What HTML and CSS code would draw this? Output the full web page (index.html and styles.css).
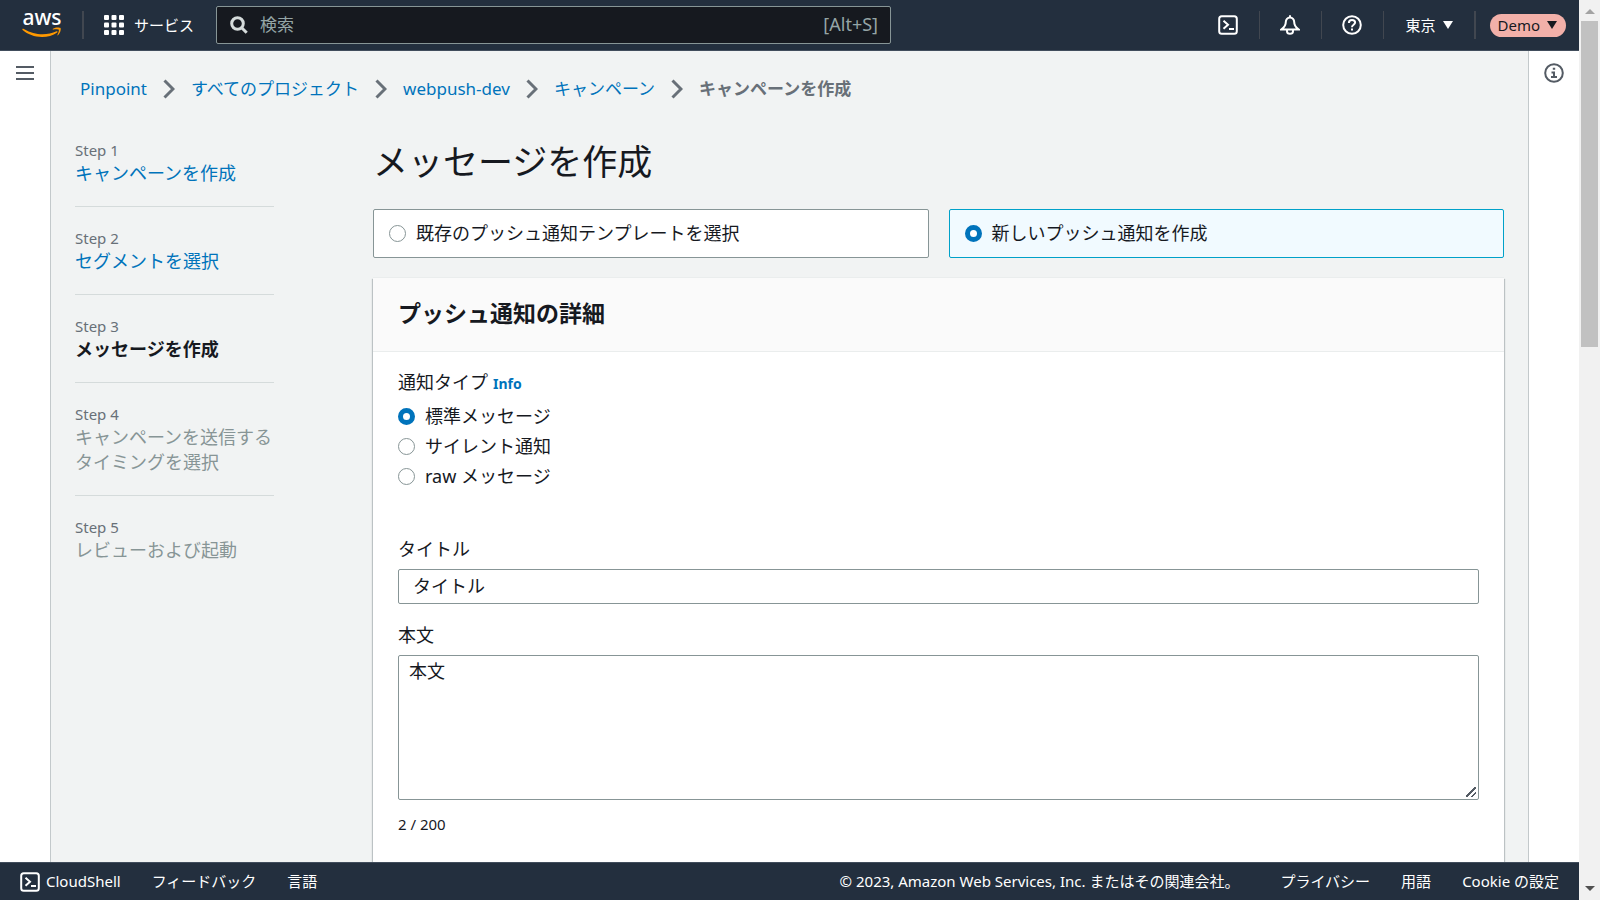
FILE: index.html
```html
<!DOCTYPE html>
<html lang="ja">
<head>
<meta charset="utf-8">
<title>キャンペーンを作成</title>
<link rel="stylesheet" href="styles.css">
</head>
<body>
<svg class="sprite" aria-hidden="true">
  <symbol id="shell" viewBox="0 0 20 20"><rect x="1.2" y="1.2" width="17.6" height="17.6" rx="2.5"/><path d="M5.5 5.8 10 9.8l-4.5 4M11 14h5"/></symbol>
  <symbol id="chevron" viewBox="0 0 12 20"><path d="M1.5 1.5 10 10l-8.500 8.500"/></symbol>
</svg>
<div class="window">
  <div class="page">
    <header class="topbar">
      <a class="logo" href="#" aria-label="AWS"><span class="logo-text">aws</span><svg class="smile" viewBox="0 0 40 11"><path d="M.3 2.300c.3-.6.9-.6 1.500-.2C8.500 6 14 7.300 20.500 7.300c5 0 10-1.200 14-3 .8-.3 1.500.5.7 1.100C31 8.600 25.500 10 20 10 12.500 10 5.500 7.500.6 3.100z"/><path d="M36.800 2.800c-.8-1-4.300-.5-5.700-.3-.5 0-.6-.4-.1-.7C33.500 0 37.800.4 38.500 1.100c.7.7-.1 5.300-2.500 7.200-.4.300-.8.100-.6-.3.500-1.300 2-4.300 1.400-5.200z"/></svg></a>
      <span class="rule"></span>
      <button class="services"><svg class="icon" viewBox="0 0 20 20"><g class="solid"><rect width="5" height="5" rx="1"/><rect x="7.500" width="5" height="5" rx="1"/><rect x="15" width="5" height="5" rx="1"/><rect y="7.500" width="5" height="5" rx="1"/><rect x="7.500" y="7.500" width="5" height="5" rx="1"/><rect x="15" y="7.500" width="5" height="5" rx="1"/><rect y="15" width="5" height="5" rx="1"/><rect x="7.500" y="15" width="5" height="5" rx="1"/><rect x="15" y="15" width="5" height="5" rx="1"/></g></svg>サービス</button>
      <label class="search"><svg class="search-icon" viewBox="0 0 18 18"><circle cx="7.500" cy="7.500" r="5.800"/><path d="m11.700 11.700 5 5"/></svg><input type="search" placeholder="検索" aria-label="検索"><span>[Alt+S]</span></label>
      <nav class="tools">
        <button aria-label="CloudShell"><svg class="icon"><use href="#shell"/></svg></button>
        <button aria-label="通知"><svg class="icon" viewBox="0 0 20 20"><path d="M10 .3v2.200M10 2.500c-2.600 0-4.200 2-4.200 4.600 0 4-1.800 5.600-4.300 7.300h17c-2.500-1.700-4.300-3.300-4.300-7.300 0-2.600-1.600-4.600-4.200-4.600zM7 15v1.200c0 1.500 1.300 2.600 3 2.600s3-1.100 3-2.600V15"/></svg></button>
        <button aria-label="ヘルプ"><svg class="icon" viewBox="0 0 20 20"><circle cx="10" cy="10" r="8.800"/><path d="M6.900 8c0-2 1.300-3.100 3.100-3.100s3.100 1.100 3.100 2.700c0 2.200-3.100 2.100-3.100 4.600M10 13.500v2"/></svg></button>
        <button class="region">東京<svg class="caret" viewBox="0 0 10 8"><path d="M0 0h10L5 8z"/></svg></button>
      </nav>
      <button class="account">Demo<svg class="caret" viewBox="0 0 10 8"><path d="M0 0h10L5 8z"/></svg></button>
    </header>

    <div class="workspace">
      <aside class="rail"><button aria-label="メニュー"><svg class="menu" viewBox="0 0 18 16"><path d="M0 2h18M0 8h18M0 14h18"/></svg></button></aside>
      <main class="content">
        <nav class="crumbs" aria-label="パンくず">
          <a href="#">Pinpoint</a><svg><use href="#chevron"/></svg>
          <a href="#">すべてのプロジェクト</a><svg><use href="#chevron"/></svg>
          <a href="#">webpush-dev</a><svg><use href="#chevron"/></svg>
          <a href="#">キャンペーン</a><svg><use href="#chevron"/></svg>
          <strong>キャンペーンを作成</strong>
        </nav>
        <div class="wizard">
          <ol class="steps">
            <li><small>Step 1</small><a href="#">キャンペーンを作成</a></li>
            <li><small>Step 2</small><a href="#">セグメントを選択</a></li>
            <li><small>Step 3</small><strong>メッセージを作成</strong></li>
            <li><small>Step 4</small><span>キャンペーンを送信する<br>タイミングを選択</span></li>
            <li><small>Step 5</small><span>レビューおよび起動</span></li>
          </ol>
          <form class="form">
            <h1>メッセージを作成</h1>
            <div class="tiles">
              <label class="tile"><input type="radio" name="source">既存のプッシュ通知テンプレートを選択</label>
              <label class="tile selected"><input type="radio" name="source" checked>新しいプッシュ通知を作成</label>
            </div>
            <section class="panel">
              <h2>プッシュ通知の詳細</h2>
              <div class="panel-body">
                <fieldset>
                  <legend>通知タイプ<a class="info" href="#">Info</a></legend>
                  <label><input type="radio" name="kind" checked>標準メッセージ</label>
                  <label><input type="radio" name="kind">サイレント通知</label>
                  <label><input type="radio" name="kind">raw メッセージ</label>
                </fieldset>
                <div class="field">
                  <label for="title">タイトル</label>
                  <input id="title" type="text" value="タイトル">
                </div>
                <div class="field">
                  <label for="message">本文</label>
                  <textarea id="message">本文</textarea>
                </div>
                <p class="count">2 / 200</p>
              </div>
            </section>
          </form>
        </div>
      </main>
      <aside class="rail right"><button aria-label="情報"><svg class="icon" viewBox="0 0 20 20"><circle cx="10" cy="10" r="8.800"/><path d="M8.800 5.800h2.400M7.500 9.500H10v4.200M7 14h6"/></svg></button></aside>
    </div>

    <footer class="footer">
      <button class="shell"><svg class="icon"><use href="#shell"/></svg>CloudShell</button>
      <a href="#">フィードバック</a>
      <a href="#">言語</a>
      <span class="legal">© 2023, Amazon Web Services, Inc. またはその関連会社。</span>
      <a href="#">プライバシー</a>
      <a href="#">用語</a>
      <a href="#">Cookie の設定</a>
    </footer>
  </div>
  <div class="scrollbar" aria-hidden="true">
    <svg viewBox="0 0 10 5"><path class="up" d="M0 5h10L5 0z"/></svg>
    <div class="thumb"></div>
    <svg viewBox="0 0 10 5"><path class="down" d="M0 0h10L5 5z"/></svg>
  </div>
</div>
</body>
</html>
```
FILE: styles.css
```css
* { box-sizing: border-box; }
body {
  margin: 0;
  font: 400 18px/25px "Noto Sans", "Noto Sans CJK JP", sans-serif;
  color: #16191f;
}
button, input, textarea { font: inherit; color: inherit; }
button { border: 0; background: none; padding: 0; }
a { color: #0073bb; text-decoration: none; }
strong { font-weight: 700; }
svg { display: block; flex: none; fill: none; stroke: currentColor; stroke-width: 2; }
.sprite { position: absolute; width: 0; height: 0; }
.icon { width: 20px; height: 20px; }
.solid, .caret, .smile, .scrollbar path { fill: currentColor; stroke: none; }

.window { display: flex; height: 100vh; }
.page { flex: 1; min-width: 0; display: flex; flex-direction: column; }

.topbar {
  display: flex;
  align-items: center;
  flex: none;
  height: 51px;
  padding: 0 13px 0 22px;
  background: #232f3e;
  border-bottom: 1px solid #414d5c;
  color: #fff;
  font-size: 15px;
}
.logo { width: 40px; padding-bottom: 3px; color: #fff; text-align: center; }
.logo-text { display: block; font: 500 21px/16px "Noto Sans", sans-serif; padding-bottom: 2px; }
.smile { width: 40px; height: 11px; color: #ff9900; }
.rule { width: 2px; height: 28px; margin: 0 20px; background: #414750; }
.services { display: flex; align-items: center; gap: 10px; }
.search {
  flex: 0 1 675px;
  display: flex;
  align-items: center;
  height: 38px;
  margin-left: 22px;
  padding: 0 12px 0 13px;
  border: 1px solid #879596;
  border-radius: 2px;
  background: #16191f;
  color: #95a5a6;
  font-size: 17px;
}
.search-icon { width: 18px; height: 18px; color: #d5dbdb; stroke-width: 3; }
.search input { flex: 1; min-width: 0; margin-left: 12px; padding: 0 0 2px; border: 0; outline: 0; background: none; }
.search span { padding-bottom: 2px; font-size: 18px; }
.search input::placeholder { color: #95a5a6; opacity: 1; }
.tools { display: flex; align-items: center; margin-left: auto; }
.tools button { display: flex; align-items: center; justify-content: center; height: 28px; padding: 0 21px 0 20px; border-right: 1px solid #414750; }
.tools .region { gap: 8px; padding: 0 21px; border-right-width: 2px; }
.caret { width: 10px; height: 8px; }
.account { display: flex; align-items: center; gap: 7px; height: 23px; margin-left: 14px; padding: 0 9px 0 7px; border-radius: 12px; background: #f2b0a9; color: #16191f; }

.workspace { flex: 1; min-height: 0; display: flex; }
.rail { flex: none; width: 51px; padding: 12px 15px; border-right: 1px solid #c3c9cb; color: #545b64; }
.rail.right { border-right: 0; border-left: 1px solid #c3c9cb; }
.rail .menu { width: 18px; height: 16px; margin: 2px 1px; }
.content { flex: 1; min-width: 0; overflow: hidden; padding: 25px 24px 0; background: #f1f3f3; }

.crumbs { display: flex; align-items: center; gap: 16px; padding-left: 5px; font-size: 17px; }
.crumbs svg { width: 12px; height: 20px; color: #687078; stroke-width: 3; }
.crumbs strong { color: #687078; }
.wizard { display: flex; gap: 99px; }
.steps { flex: none; width: 199px; margin: 0; padding: 38px 0 0; list-style: none; }
.steps li { padding-bottom: 20px; }
.steps li + li { padding-top: 20px; border-top: 1px solid #d5dbdb; }
.steps li > * { display: block; white-space: nowrap; }
.steps small { font-size: 15px; line-height: 22px; color: #687078; }
.steps span { color: #879596; }

.form { flex: 1; min-width: 0; }
h1 { margin: 36px 0 22px; font-size: 35px; line-height: 50px; font-weight: 400; }
input[type="radio"] {
  appearance: none;
  flex: none;
  width: 17px;
  height: 17px;
  margin: 0 10px 0 0;
  border: 1px solid #879596;
  border-radius: 50%;
  background: #fff;
}
input[type="radio"]:checked { border: 5px solid #0073bb; }
.tiles { display: grid; grid-template-columns: 1fr 1fr; gap: 20px; }
.tile { display: flex; align-items: center; height: 49px; padding: 0 15px; border: 1px solid #879596; border-radius: 2px; background: #fff; }
.tile.selected { border-color: #00a1c9; background: #f1faff; }
.panel { margin-top: 20px; background: #fff; box-shadow: -1px 1px 1px #bcc2c4, 1px 1px 1px #bcc2c4, 0 -1px #eaeded; }
h2 { margin: 0; padding: 20px 25px 22px; border-bottom: 1px solid #eaeded; background: #fafafa; font-size: 23px; line-height: 31px; }
.panel-body { padding: 18px 25px 60px; }
fieldset { margin: 0 0 43px; padding: 0; border: 0; }
legend { padding: 0; margin-bottom: 8px; }
fieldset label { display: flex; align-items: center; margin-bottom: 5px; }
.info { margin-left: 5px; font-size: 14px; font-weight: 700; }
.field { display: flex; flex-direction: column; gap: 7px; }
.field + .field { margin-top: 19px; }
.field input, .field textarea { width: 100%; border: 1px solid #879596; border-radius: 2px; background: #fff; }
.field input { height: 35px; padding: 0 14px 4px; }
.field textarea { height: 145px; padding: 3px 10px; resize: vertical; }
.field textarea::-webkit-resizer {
  background: linear-gradient(135deg, transparent 6px, #545b64 6px 8px, transparent 8px 10px, #545b64 10px 12px, transparent 12px) 3px 3px / 10px 10px no-repeat;
}
.count { margin: 14px 0 0; font-size: 15px; line-height: 20px; }

.footer {
  display: flex;
  align-items: center;
  flex: none;
  height: 38px;
  padding: 0 20px;
  gap: 31px;
  border-top: 1px solid #414d5c;
  background: #232f3e;
  color: #fff;
  font-size: 15px;
}
.footer a { color: #fff; }
.shell { display: flex; align-items: center; gap: 6px; }
.legal { margin: 0 10px 0 auto; }

.scrollbar { flex: none; width: 21px; display: flex; flex-direction: column; align-items: center; padding: 9px 0; background: #f1f1f1; }
.scrollbar svg { width: 10px; height: 5px; }
.up { color: #a3a3a3; }
.down { color: #505050; }
.thumb { width: 17px; height: 37%; margin: 7px 0 auto; background: #c1c1c1; }
```
